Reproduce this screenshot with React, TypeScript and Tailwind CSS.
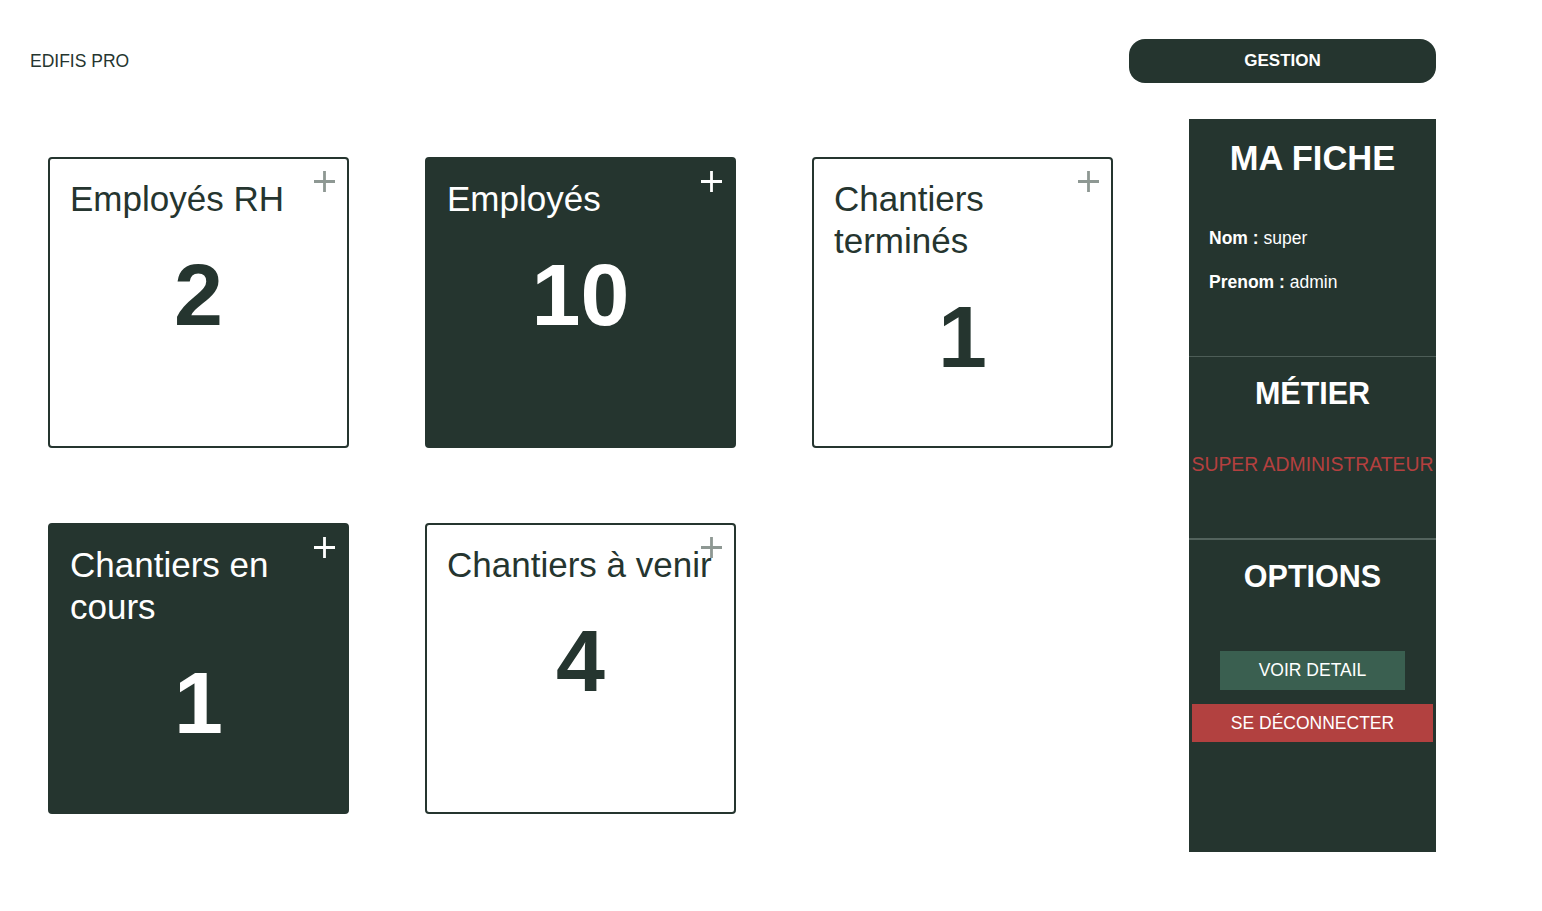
import React from 'react';

type Stat = {
  id: string;
  title: string;
  value: number;
  dark: boolean;
};

const stats: Stat[] = [
  { id: 'rh', title: 'Employés RH', value: 2, dark: false },
  { id: 'emp', title: 'Employés', value: 10, dark: true },
  { id: 'done', title: 'Chantiers terminés', value: 1, dark: false },
  { id: 'current', title: 'Chantiers en cours', value: 1, dark: true },
  { id: 'next', title: 'Chantiers à venir', value: 4, dark: false },
];

function PlusIcon({ dark }: { dark: boolean }) {
  return (
    <svg
      className={dark ? 'absolute top-[12px] right-[12px] text-white' : 'absolute top-[12px] right-[12px] text-[#8e9893]'}
      width="21"
      height="21"
      viewBox="0 0 21 21"
      fill="none"
      stroke="currentColor"
      strokeWidth={2.8}
    >
      <path d="M10.5 0v21M0 10.5h21" />
    </svg>
  );
}

function StatCard({ stat, wide }: { stat: Stat; wide: boolean }) {
  return (
    <div
      className={
        (stat.dark
          ? 'bg-[#25352f] border-[#25352f] text-white '
          : 'bg-white border-[#25352f] text-[#25352f] ') +
        (wide ? 'w-[311px] ' : 'w-[301px] ') +
        'relative h-[291px] border-2 rounded-[4px] px-[20px] pt-[19px]'
      }
    >
      <PlusIcon dark={stat.dark} />
      <h2 className="text-[35px] leading-[42px] font-normal">{stat.title}</h2>
      <div className="mt-[31px] text-center text-[88px] leading-none font-bold">{stat.value}</div>
    </div>
  );
}

export default function App() {
  return (
    <div className="min-h-screen bg-white font-['Liberation_Sans',Arial,sans-serif] text-[#25352f]">
      {/* Header */}
      <header className="flex items-center justify-between pt-[39px] pl-[30px] pr-[106px]">
        <span className="text-[17.5px]">EDIFIS PRO</span>
        <button className="w-[307px] h-[44px] rounded-[16px] bg-[#25352f] text-white font-bold text-[17px]">
          GESTION
        </button>
      </header>

      <div className="flex items-start mt-[36px] pl-[48px]">
        {/* Stat cards */}
        <div className="grid grid-cols-[301px_311px_301px] gap-x-[76px] gap-y-[75px] mt-[38px]">
          {stats.map((stat, index) => (
            <StatCard key={stat.id} stat={stat} wide={index % 3 === 1} />
          ))}
        </div>

        {/* Ma fiche */}
        <aside className="ml-[76px] w-[247px] h-[733px] bg-[#25352f] text-white flex flex-col">
          <section className="h-[238px] border-b border-[#4d5d57] px-[20px]">
            <h1 className="pt-[19px] text-center font-bold text-[34.5px] leading-[40px]">MA FICHE</h1>
            <p className="mt-[50px] text-[17.5px] leading-[20px]">
              <span className="font-bold">Nom :</span> super
            </p>
            <p className="mt-[24px] text-[17.5px] leading-[20px]">
              <span className="font-bold">Prenom :</span> admin
            </p>
          </section>

          <section className="h-[183px] border-b-2 border-[#53635d] flex flex-col items-center">
            <h2 className="pt-[18px] font-bold text-[30.5px] leading-[36px]">MÉTIER</h2>
            <p className="mt-[42px] text-[19.4px] leading-[22px] text-[#b4403f] whitespace-nowrap">
              SUPER ADMINISTRATEUR
            </p>
          </section>

          <section className="flex flex-col items-center px-[3px]">
            <h2 className="pt-[18px] font-bold text-[30.5px] leading-[36px]">OPTIONS</h2>
            <button className="mt-[57px] w-[185px] h-[39px] bg-[#3a5f50] text-white text-[17.5px]">
              VOIR DETAIL
            </button>
            <button className="mt-[14px] w-full h-[38px] bg-[#b24140] text-white text-[17.5px]">
              SE DÉCONNECTER
            </button>
          </section>
        </aside>
      </div>
    </div>
  );
}
